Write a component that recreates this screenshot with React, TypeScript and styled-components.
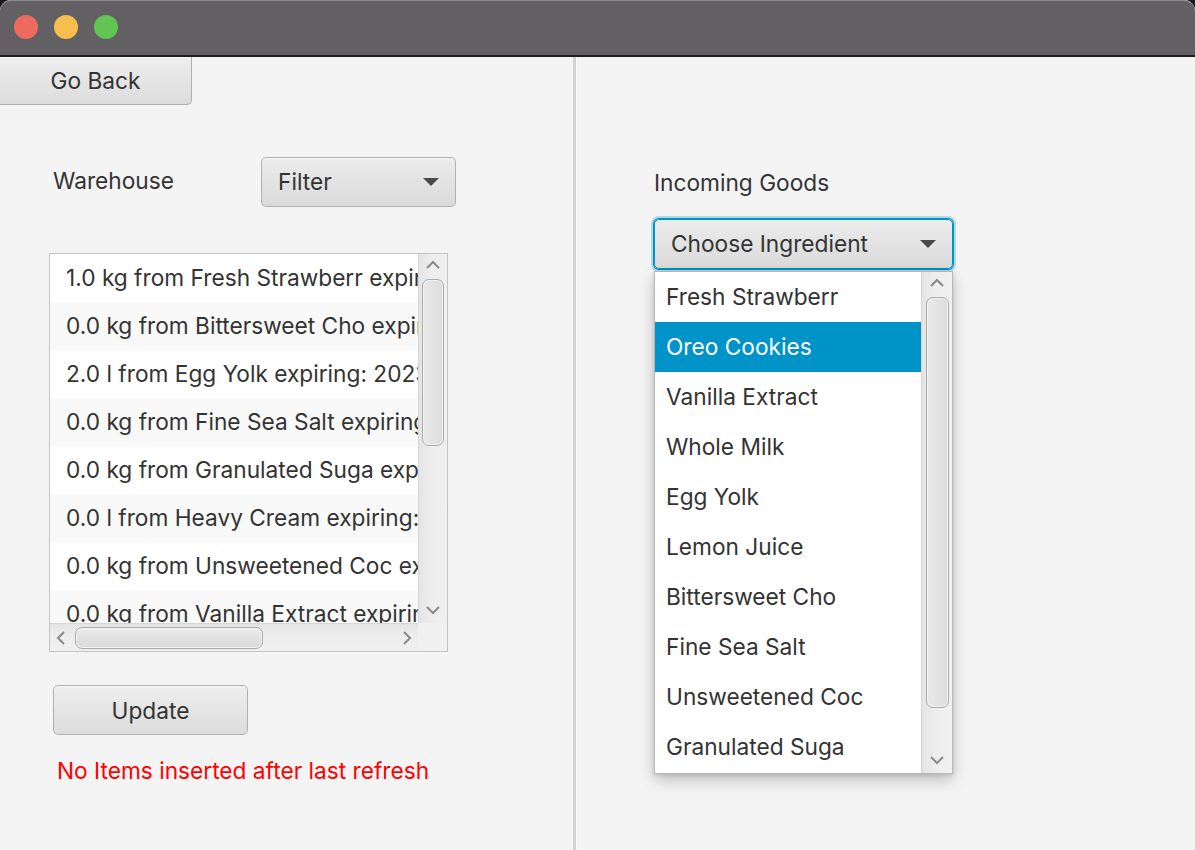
import React from "react";
import styled, { createGlobalStyle } from "styled-components";

const FS = "22.7px";

const GlobalStyle = createGlobalStyle`
  html, body {
    margin: 0;
    padding: 0;
    background: #1a1a1a;
  }
  body {
    font-family: Inter, "Noto Sans", "Liberation Sans", sans-serif;
  }
  * { box-sizing: border-box; }
`;

const Window = styled.div`
  width: 1195px;
  height: 850px;
  display: flex;
  flex-direction: column;
  background: #f4f4f4;
  border-radius: 11px 11px 0 0;
  overflow: hidden;
  color: #333333;
  font-size: ${FS};
`;

const TitleBar = styled.div`
  height: 57px;
  flex: none;
  display: flex;
  align-items: center;
  gap: 16px;
  padding: 0 0 2px 14px;
  background: #636063;
  border-top: 1px solid #8c8a8c;
  border-bottom: 2px solid #1c1c1c;
  border-radius: 11px 11px 0 0;
`;

const Light = styled.span<{ $color: string }>`
  width: 24px;
  height: 24px;
  border-radius: 50%;
  background: ${(p) => p.$color};
`;

const Body = styled.div`
  flex: 1;
  display: flex;
  min-height: 0;
`;

const LeftPane = styled.div`
  width: 573px;
  flex: none;
  display: flex;
  flex-direction: column;
  align-items: flex-start;
`;

const Divider = styled.div`
  width: 4px;
  flex: none;
  background: #d2d2d2;
  border-right: 1px solid #fafafa;
`;

const RightPane = styled.div`
  flex: 1;
  display: flex;
  flex-direction: column;
  align-items: flex-start;
  padding: 112px 0 0 77px;
`;

const Button = styled.button<{ $w: number; $h: number }>`
  width: ${(p) => p.$w}px;
  height: ${(p) => p.$h}px;
  font-family: inherit;
  font-size: ${FS};
  color: #333333;
  background: linear-gradient(#eeeeee, #dcdcdc);
  border: 1px solid #b0b0b0;
  border-radius: 5px;
  box-shadow: inset 0 1px 0 #f8f8f8;
  padding: 0;
  display: flex;
  align-items: center;
  justify-content: center;
`;

const GoBackButton = styled(Button)`
  border-left: none;
  border-top: none;
  border-radius: 0 0 5px 0;
`;

const UpdateButton = styled(Button)`
  margin: 33px 0 0 53px;
`;

const WarehouseRow = styled.div`
  margin: 52px 0 0 53px;
  display: flex;
  align-items: center;
`;

const Label = styled.div<{ $w?: number; $shift: number }>`
  width: ${(p) => (p.$w ? `${p.$w}px` : "auto")};
  font-size: ${FS};
  color: #333333;
  line-height: 28px;
  margin-top: ${(p) => p.$shift}px;
`;

const Combo = styled.div<{ $w: number; $focused?: boolean }>`
  position: relative;
  width: ${(p) => p.$w}px;
  height: 50px;
  display: flex;
  align-items: center;
  justify-content: space-between;
  padding: 0 16px 1px 16px;
  font-size: ${FS};
  color: #333333;
  background: linear-gradient(#ececec, #dadada);
  border: 1px solid ${(p) => (p.$focused ? "#0093c6" : "#b0b0b0")};
  border-radius: 5px;
  box-shadow: ${(p) =>
    p.$focused
      ? "0 0 0 1px #0093c6, 0 0 0 3px rgba(0,147,198,0.28)"
      : "inset 0 1px 0 #f8f8f8"};
`;

const Arrow = styled.span`
  width: 0;
  height: 0;
  border-left: 8px solid transparent;
  border-right: 8px solid transparent;
  border-top: 8px solid #4a4a4a;
`;

const ListBox = styled.div`
  margin: 46px 0 0 49px;
  width: 399px;
  height: 399px;
  border: 1px solid #c4c4c4;
  display: grid;
  grid-template-columns: 1fr 29px;
  grid-template-rows: 1fr 28px;
  background: #ffffff;
`;

const ListViewport = styled.div`
  overflow: hidden;
  display: flex;
  flex-direction: column;
`;

const ListRow = styled.div<{ $alt: boolean }>`
  height: 48px;
  flex: none;
  display: flex;
  align-items: center;
  padding: 0 0 2px 16px;
  white-space: nowrap;
  overflow: hidden;
  font-size: ${FS};
  color: #333333;
  background: ${(p) => (p.$alt ? "#f9f9f9" : "#ffffff")};
`;

const VTrack = styled.div`
  display: flex;
  flex-direction: column;
  align-items: center;
  background: linear-gradient(90deg, #e4e4e4, #ededed 40%, #f0f0f0);
  border-left: 1px solid #d6d6d6;
`;

const HTrack = styled.div`
  display: flex;
  align-items: center;
  background: linear-gradient(#e4e4e4, #ededed 40%, #f0f0f0);
  border-top: 1px solid #d6d6d6;
`;

const Corner = styled.div`
  background: #f0f0f0;
`;

const ArrowCell = styled.div<{ $size: number }>`
  width: ${(p) => p.$size}px;
  height: ${(p) => p.$size}px;
  flex: none;
  display: flex;
  align-items: center;
  justify-content: center;
`;

const Thumb = styled.div<{ $w: number; $h: number; $offset: number }>`
  flex: none;
  width: ${(p) => p.$w}px;
  height: ${(p) => p.$h}px;
  margin-top: ${(p) => p.$offset}px;
  border: 1px solid #a9a9a9;
  border-radius: 7px;
  background: linear-gradient(90deg, #e9e9e9, #dcdcdc);
  box-shadow: inset 0 0 0 1px #f4f4f4;
`;

const HThumb = styled.div<{ $w: number; $h: number; $offset: number }>`
  flex: none;
  width: ${(p) => p.$w}px;
  height: ${(p) => p.$h}px;
  margin-left: ${(p) => p.$offset}px;
  border: 1px solid #a9a9a9;
  border-radius: 7px;
  background: linear-gradient(#ececec, #d8d8d8);
  box-shadow: inset 0 0 0 1px #f4f4f4;
`;

const Spacer = styled.div`
  flex: 1;
`;

const Status = styled.div`
  margin: 22px 0 0 57px;
  color: #ff0000;
  font-size: ${FS};
  line-height: 28px;
`;

const ComboWrap = styled.div`
  position: relative;
  margin-top: 22px;
`;

const Popup = styled.div`
  position: absolute;
  left: 0;
  top: 52px;
  width: 299px;
  height: 503px;
  border: 1px solid #b8b8b8;
  background: #ffffff;
  display: grid;
  grid-template-columns: 1fr 31px;
  box-shadow: 0 6px 14px rgba(0, 0, 0, 0.22), 0 1px 4px rgba(0, 0, 0, 0.12);
  z-index: 5;
`;

const PopupList = styled.div`
  display: flex;
  flex-direction: column;
`;

const PopupItem = styled.div<{ $selected: boolean }>`
  height: 50px;
  flex: none;
  display: flex;
  align-items: center;
  padding: 0 0 2px 11px;
  white-space: nowrap;
  font-size: ${FS};
  color: ${(p) => (p.$selected ? "#ffffff" : "#333333")};
  background: ${(p) => (p.$selected ? "#0093c8" : "#ffffff")};
`;

const Chevron = ({ dir }: { dir: "up" | "down" | "left" | "right" }) => {
  const pts: Record<string, string> = {
    up: "2,8 8,2 14,8",
    down: "2,2 8,8 14,2",
    left: "8,2 2,8 8,14",
    right: "2,2 8,8 2,14",
  };
  const horiz = dir === "left" || dir === "right";
  return (
    <svg
      width={horiz ? 10 : 16}
      height={horiz ? 16 : 10}
      viewBox={horiz ? "0 0 10 16" : "0 0 16 10"}
    >
      <polyline points={pts[dir]} fill="none" stroke="#8a8a8a" strokeWidth="2" />
    </svg>
  );
};

const warehouseItems = [
  "1.0 kg from Fresh Strawberr expiring: 2023",
  "0.0 kg from Bittersweet Cho expiring: 2023",
  "2.0 l from Egg Yolk expiring: 2023-01-01",
  "0.0 kg from Fine Sea Salt expiring: 2023",
  "0.0 kg from Granulated Suga expiring: 2023",
  "0.0 l from Heavy Cream expiring: 2023",
  "0.0 kg from Unsweetened Coc expiring: 2023",
  "0.0 kg from Vanilla Extract expiring: 2023",
];

const ingredients = [
  "Fresh Strawberr",
  "Oreo Cookies",
  "Vanilla Extract",
  "Whole Milk",
  "Egg Yolk",
  "Lemon Juice",
  "Bittersweet Cho",
  "Fine Sea Salt",
  "Unsweetened Coc",
  "Granulated Suga",
];

export default function App() {
  return (
    <>
      <GlobalStyle />
      <Window>
        <TitleBar>
          <Light $color="#ee6a5f" />
          <Light $color="#f5be4f" />
          <Light $color="#61c454" />
        </TitleBar>
        <Body>
          <LeftPane>
            <GoBackButton $w={192} $h={48}>
              Go Back
            </GoBackButton>
            <WarehouseRow>
              <Label $w={208} $shift={-3}>
                Warehouse
              </Label>
              <Combo $w={195}>
                <span>Filter</span>
                <Arrow />
              </Combo>
            </WarehouseRow>
            <ListBox>
              <ListViewport>
                {warehouseItems.map((t, i) => (
                  <ListRow key={t} $alt={i % 2 === 1}>
                    {t}
                  </ListRow>
                ))}
              </ListViewport>
              <VTrack>
                <ArrowCell $size={22}>
                  <Chevron dir="up" />
                </ArrowCell>
                <Thumb $w={22} $h={167} $offset={3} />
                <Spacer />
                <ArrowCell $size={26}>
                  <Chevron dir="down" />
                </ArrowCell>
              </VTrack>
              <HTrack>
                <ArrowCell $size={22}>
                  <Chevron dir="left" />
                </ArrowCell>
                <HThumb $w={188} $h={22} $offset={3} />
                <Spacer />
                <ArrowCell $size={22}>
                  <Chevron dir="right" />
                </ArrowCell>
              </HTrack>
              <Corner />
            </ListBox>
            <UpdateButton $w={195} $h={50}>
              Update
            </UpdateButton>
            <Status>No Items inserted after last refresh</Status>
          </LeftPane>
          <Divider />
          <RightPane>
            <Label $shift={0}>Incoming Goods</Label>
            <ComboWrap>
              <Combo $w={299} $focused>
                <span>Choose Ingredient</span>
                <Arrow />
              </Combo>
              <Popup>
                <PopupList>
                  {ingredients.map((t, i) => (
                    <PopupItem key={t} $selected={i === 1}>
                      {t}
                    </PopupItem>
                  ))}
                </PopupList>
                <VTrack>
                  <ArrowCell $size={22}>
                    <Chevron dir="up" />
                  </ArrowCell>
                  <Thumb $w={23} $h={411} $offset={3} />
                  <Spacer />
                  <ArrowCell $size={26}>
                    <Chevron dir="down" />
                  </ArrowCell>
                </VTrack>
              </Popup>
            </ComboWrap>
          </RightPane>
        </Body>
      </Window>
    </>
  );
}
